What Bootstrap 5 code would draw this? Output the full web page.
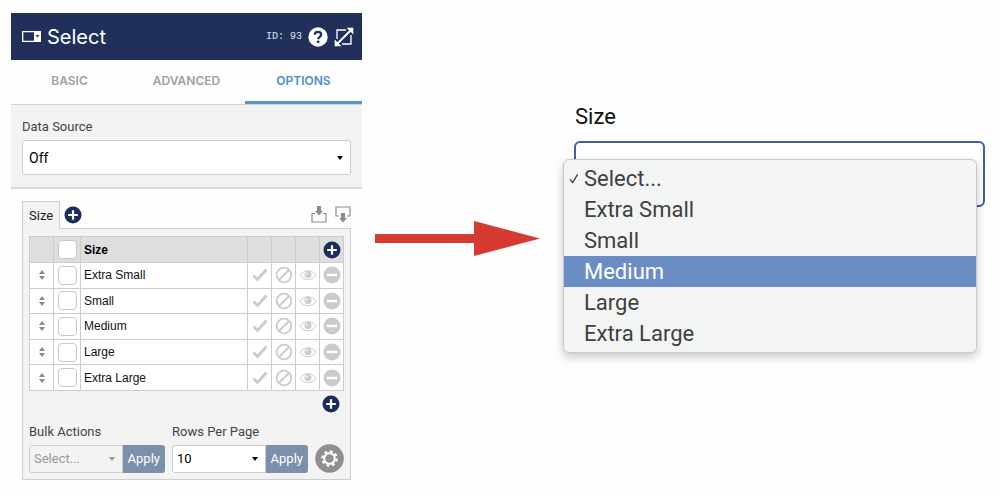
<!DOCTYPE html>
<html lang="en">
<head>
<meta charset="utf-8">
<meta name="viewport" content="width=device-width, initial-scale=1">
<title>Select element options</title>
<link href="https://cdn.jsdelivr.net/npm/bootstrap@5.3.0/dist/css/bootstrap.min.css" rel="stylesheet">
<style>
  body { font-family: Roboto, "Liberation Sans", sans-serif; font-size: 13px; line-height: 18px; color: #333; background: #fefefe; }
  svg { display: block; flex: none; }
  .layout { grid-template-columns: 351fr 178fr 445fr; padding: 13px 15px 12px 11px; }
  .layout > * { min-width: 0; }
  .icon-btn { padding: 0; border: 0; background: none; color: inherit; display: inline-block; }

  .editor-head { background: #20305a; color: #fff; height: 47px; padding: 0 8px 0 11px; gap: 6px; }
  .editor-head h1 { font: 400 20px/24px Inter, sans-serif; margin: 0 auto 0 0; }
  .editor-id { font: 10px/12px "Liberation Mono", monospace; color: #dfe3ec; }
  .editor-tabs { height: 45px; border-bottom: 1px solid #d3d4d6; }
  .editor-tabs .nav-link { height: 44px; padding: 0; border-bottom: 3px solid transparent; border-radius: 0; font: 600 12px/42px Inter, sans-serif; color: #a0a0a0; text-align: center; }
  .editor-tabs .nav-link.active { color: #4a8fca; border-bottom-color: #5a94c8; }

  .source { background: #f3f3f3; padding: 13px 11px 12px; border-bottom: 2px solid #d8d8d8; }
  label { color: #444; }
  .pick { --caret: url("data:image/svg+xml,%3Csvg xmlns='http://www.w3.org/2000/svg' viewBox='0 0 6 4'%3E%3Cpath d='M0 0h6L3 4z'/%3E%3C/svg%3E"); background: #fff var(--caret) no-repeat right 7px center / 6px 4px; border: 1px solid #ccc; border-radius: 3px; padding: 0 18px 0 6px; font-size: 13px; line-height: 18px; color: #000; }
  .source .pick { height: 35px; font-size: 14px; }
  .pick.idle { background-color: #f3f3f3; color: #999; --caret: url("data:image/svg+xml,%3Csvg xmlns='http://www.w3.org/2000/svg' viewBox='0 0 6 4'%3E%3Cpath fill='%23999' d='M0 0h6L3 4z'/%3E%3C/svg%3E"); }

  .option-set { padding: 12px 11px 0; }
  .set-tab { background: #f3f3f3; border: 1px solid #ccc; border-bottom: 0; height: 28px; margin-bottom: -1px; padding: 0 6px; color: #222; position: relative; }
  .set-body { background: #f3f3f3; border: 1px solid #ccced2; padding: 7px 6px 6px; }
  .choices { table-layout: fixed; width: 100%; height: 155px; border-collapse: collapse; background: #fff; color: #111; font: 12px/18px "Liberation Sans", sans-serif; }
  .choices th, .choices td { border: 1px solid #ccc; padding: 0; vertical-align: middle; }
  .choices thead th { background: #dedede; color: #000; height: 26px; }
  .choices .name-cell { padding-left: 3px; }
  .choices svg { margin: 0 auto; }
  .choices input { appearance: none; display: block; width: 19px; height: 19px; margin: 0 auto; border: 1px solid #c8c8c8; border-radius: 4px; background: #fff; }
  .c-grip, .c-tool { width: 24px; }
  .c-check { width: 27px; }
  .c-tool-ink { color: #cbcbcd; }

  .paging { gap: 7px; padding-top: 10px; }
  .paging-group { flex: 1 1 0; min-width: 0; }
  .paging .pick, .paging .apply { height: 28px; }
  .paging .pick { border-radius: 3px 0 0 3px; padding-left: 4px; }
  .paging .apply { background: #7c90ab; color: #fff; border: 0; border-radius: 0 3px 3px 0; padding: 0 5px; font-size: 13px; line-height: 18px; }

  .arrow-col { padding: 199px 0 0 13px; }
  .preview { padding: 92px 0 0 24px; color: #111; font-size: 22px; line-height: 24px; }
  .preview label { color: #111; margin: 0 0 12px 11px; display: block; }
  .preview-box { display: block; width: calc(100% - 10px); margin-left: 10px; height: 66px; border: 2px solid #435f9c; border-radius: 6px; background: #fff; appearance: none; color: transparent; }
  .options-menu { position: absolute; top: 18px; left: -1px; right: 8px; background: #f3f4f4; border: 1px solid #c9c9c9; border-radius: 6px; padding: 3px 0; box-shadow: 0 4px 10px rgba(0,0,0,.22); }
  .options-menu button { display: flex; align-items: center; width: 100%; height: 31px; border: 0; padding: 0 0 0 5px; background: none; color: #404040; text-align: left; }
  .options-menu button.hot { background: #6b8dc6; color: #fff; }
  .tick { width: 15px; }
</style>
</head>
<body>
<svg width="0" height="0" class="position-absolute" aria-hidden="true">
  <symbol id="i-plus" viewBox="0 0 18 18"><circle cx="9" cy="9" r="8.5" fill="#1b2d5b"/><path d="M9 4.200v9.600M4.200 9h9.600" stroke="#fff" stroke-width="2.200"/></symbol>
  <symbol id="i-grip" viewBox="0 0 8 12"><path d="M4 1l3 4H1zM4 11l3-4H1z" fill="#8a8a8a"/></symbol>
  <symbol id="i-check" viewBox="0 0 16 14"><path d="M1.500 7.500l4 4L14.500 1.500" fill="none" stroke="currentColor" stroke-width="2.900"/></symbol>
  <symbol id="i-ban" viewBox="0 0 18 18"><circle cx="9" cy="9" r="7.300" fill="none" stroke="currentColor" stroke-width="1.800"/><path d="M4 14L14 4" stroke="currentColor" stroke-width="1.800"/></symbol>
  <symbol id="i-eye" viewBox="0 0 18 12"><path d="M1 6.500C4.500 0 13.500 0 17 6.500 13.500 12 4.500 12 1 6.500z" fill="none" stroke="currentColor" stroke-width="1"/><circle cx="9" cy="5.600" r="3.500" fill="currentColor"/><circle cx="7.700" cy="4.400" r="1" fill="#fff"/></symbol>
  <symbol id="i-minus" viewBox="0 0 18 18"><circle cx="9" cy="9" r="8.500" fill="currentColor"/><path d="M3.800 9h10.400" stroke="#fff" stroke-width="2.400"/></symbol>
</svg>

<main class="layout d-grid">
  <section>
    <header class="editor-head d-flex align-items-center">
      <svg width="19" height="11" viewBox="0 0 19 11" aria-hidden="true"><path d="M.7.700h17.600v9.600H.7z" fill="none" stroke="#fff" stroke-width="1.300"/><path d="M12 0h7v11h-7z" fill="#fff"/><path d="M13.500 4h4l-2 2.500z" fill="#20305a"/></svg>
      <h1>Select</h1>
      <span class="editor-id">ID: 93</span>
      <button class="icon-btn" aria-label="Help"><svg width="20" height="20" viewBox="0 0 20 20"><circle cx="10" cy="10" r="9.700" fill="#fff"/><path d="M6.800 7.800C6.900 3.900 13.200 3.900 13.200 7.600 13.200 9.900 10.200 9.800 10.200 12.200" fill="none" stroke="#20305a" stroke-width="2.300"/><circle cx="10.200" cy="14.800" r="1.400" fill="#20305a"/></svg></button>
      <button class="icon-btn" aria-label="Expand"><svg width="20" height="20" viewBox="0 0 20 20"><path d="M12 3H3v9M17 8v9H8" fill="none" stroke="#fff" stroke-width="1.300"/><path d="M3 17L17 3" stroke="#fff" stroke-width="2"/><path d="M12.500.700H19.300V7.500zM.7 12.500V19.300H7.500z" fill="#fff"/></svg></button>
    </header>
    <nav class="editor-tabs nav nav-fill flex-nowrap">
      <a class="nav-link w-100" href="#basic">BASIC</a>
      <a class="nav-link w-100" href="#advanced">ADVANCED</a>
      <a class="nav-link active w-100" href="#options" aria-current="page">OPTIONS</a>
    </nav>
    <div class="source">
      <label for="source" class="d-block mb-1">Data Source</label>
      <select id="source" class="form-select pick"><option>Off</option></select>
    </div>

    <div class="option-set">
      <div class="d-flex align-items-center">
        <button class="set-tab">Size</button>
        <button class="icon-btn ms-1" aria-label="Add option set"><svg width="18" height="18"><use href="#i-plus"/></svg></button>
        <button class="icon-btn ms-auto" aria-label="Import"><svg width="16" height="17" viewBox="0 0 16 17"><path d="M4 7.500H1V16H15V7.500H12" fill="none" stroke="#8c8c8c" stroke-width="1.200"/><path d="M6 0h4v5h2L8 9.500 4 5H6z" fill="#8c8c8c"/></svg></button>
        <button class="icon-btn ms-2" aria-label="Export"><svg width="16" height="17" viewBox="0 0 16 17"><path d="M4 10H1V1H15V10H12" fill="none" stroke="#8c8c8c" stroke-width="1.200"/><path d="M6 7h4v5h2L8 16.500 4 12H6z" fill="#8c8c8c"/></svg></button>
      </div>
      <div class="set-body">
        <table class="choices">
          <colgroup><col class="c-grip"><col class="c-check"><col><col class="c-tool"><col class="c-tool"><col class="c-tool"><col class="c-tool"></colgroup>
          <thead><tr><th></th><th><input type="checkbox" aria-label="Select all"></th><th class="name-cell" scope="col">Size</th><th></th><th></th><th></th><th><button class="icon-btn d-block mx-auto" aria-label="Add row"><svg width="18" height="18"><use href="#i-plus"/></svg></button></th></tr></thead>
          <tbody id="rows"></tbody>
        </table>
        <div class="d-flex justify-content-end pt-1 pe-1"><button class="icon-btn" aria-label="Add row"><svg width="18" height="18"><use href="#i-plus"/></svg></button></div>
        <div class="paging d-flex align-items-end">
          <div class="paging-group">
            <label for="bulk" class="d-block mb-1">Bulk Actions</label>
            <div class="d-flex"><select id="bulk" class="form-select pick idle"><option>Select...</option></select><button class="apply">Apply</button></div>
          </div>
          <div class="paging-group">
            <label for="perpage" class="d-block mb-1">Rows Per Page</label>
            <div class="d-flex"><select id="perpage" class="form-select pick"><option>10</option></select><button class="apply">Apply</button></div>
          </div>
          <button class="icon-btn" aria-label="Settings"><svg width="29" height="29" viewBox="0 0 29 29"><circle cx="14.500" cy="14.500" r="14.300" fill="#8f8f8f"/><circle cx="14.500" cy="14.500" r="5.300" fill="none" stroke="#fff" stroke-width="2"/><circle cx="14.500" cy="14.500" r="7.200" fill="none" stroke="#fff" stroke-width="2.200" stroke-dasharray="3 2.655"/></svg></button>
        </div>
      </div>
    </div>
  </section>

  <div class="arrow-col">
    <svg class="w-100" height="54" viewBox="0 0 165 54" role="img" aria-label="becomes"><path d="M0 22h99V9l66 17.500L99 44V31H0z" fill="#d63a30"/></svg>
  </div>

  <section class="preview">
    <label for="size">Size</label>
    <div class="position-relative">
      <select id="size" class="preview-box"><option></option></select>
      <div class="options-menu" role="listbox" aria-label="Size">
        <button role="option" aria-selected="true"><span class="tick"><svg width="10" height="11" viewBox="0 0 11 12"><path d="M1 7l3 3.500L9.500 1.500" fill="none" stroke="#404040" stroke-width="1.500"/></svg></span>Select...</button>
        <button role="option"><span class="tick"></span>Extra Small</button>
        <button role="option"><span class="tick"></span>Small</button>
        <button role="option" class="hot"><span class="tick"></span>Medium</button>
        <button role="option"><span class="tick"></span>Large</button>
        <button role="option"><span class="tick"></span>Extra Large</button>
      </div>
    </div>
  </section>
</main>
<script src="https://cdn.jsdelivr.net/npm/bootstrap@5.3.0/dist/js/bootstrap.bundle.min.js"></script>
<script>
  const tool = (id, w, h) => `<td class="c-tool-ink"><svg width="${w}" height="${h}"><use href="#${id}"/></svg></td>`;
  document.getElementById('rows').innerHTML = ['Extra Small', 'Small', 'Medium', 'Large', 'Extra Large'].map(name =>
    `<tr><td><svg width="8" height="12"><use href="#i-grip"/></svg></td>
     <td><input type="checkbox" aria-label="Select ${name}"></td><td class="name-cell">${name}</td>
     ${tool('i-check', 16, 14)}${tool('i-ban', 18, 18)}${tool('i-eye', 18, 12)}${tool('i-minus', 18, 18)}</tr>`).join('');
</script>
</body>
</html>
